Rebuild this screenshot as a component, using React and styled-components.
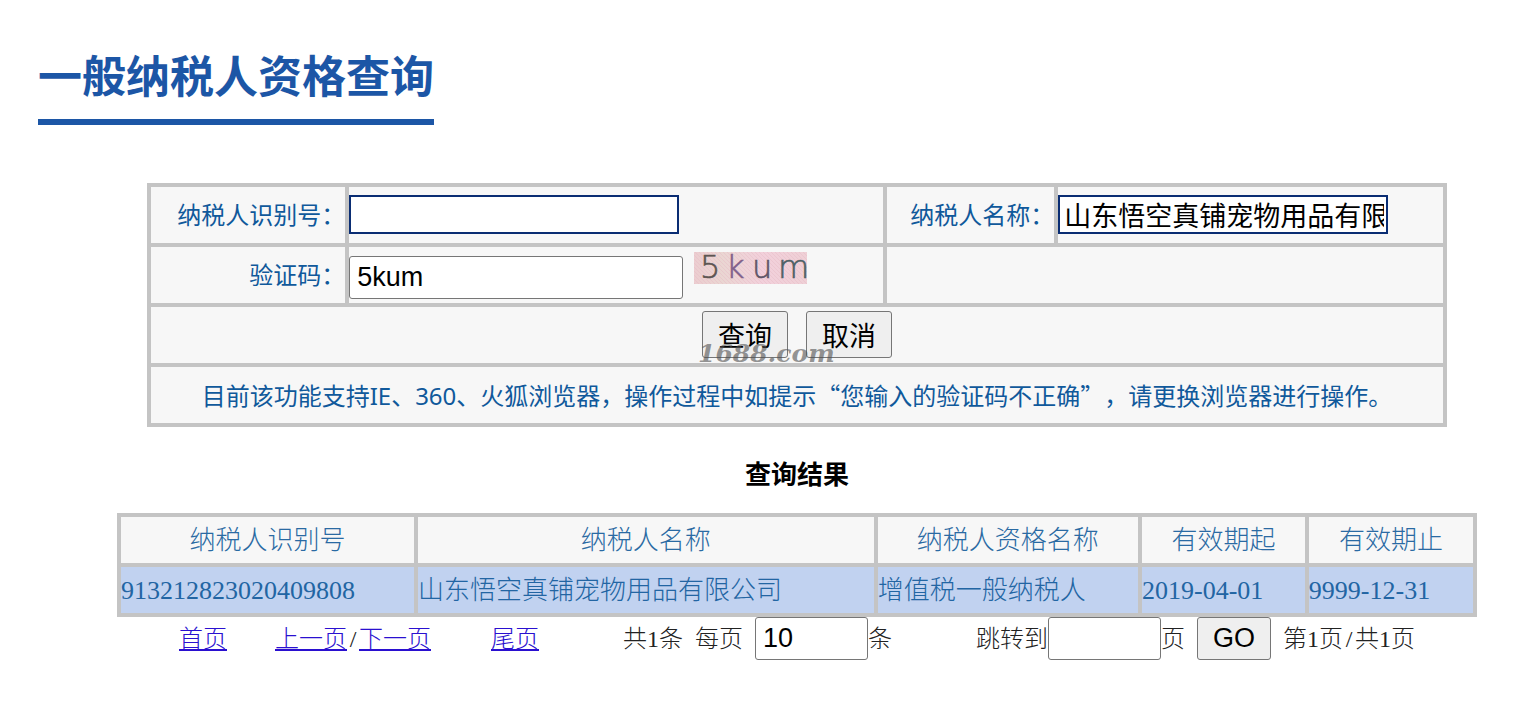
import styled, { createGlobalStyle } from "styled-components";

const GlobalStyle = createGlobalStyle`
body{
  margin: 0;
  background-color: #fff;
  text-spacing-trim: space-all;
}
*{
  box-sizing: border-box;
}
`

const cjk = `"Noto Sans CJK SC", sans-serif`;
const sans = `"Noto Sans", ${cjk}`;
const serif = `"Liberation Serif", "Noto Sans CJK SC", serif`;
const arial = `"Liberation Sans", ${cjk}`;

const Page = styled.div`
padding: 48px 0 40px 38px;
font-family: ${serif};
`
const Title = styled.h1`
display: inline-block;
margin: 0;
padding-bottom: 19px;
border-bottom: 6px solid #1c56a6;
color: #1c56a6;
font-family: ${cjk};
font-size: 44px;
font-weight: bold;
line-height: 52px;
vertical-align: top;
`
const Content = styled.main`
display: flex;
flex-direction: column;
align-items: center;
padding: 58px 0 0 24px;
`
const Table = styled.table`
width: 100%;
max-width: ${(props) => props.$max}px;
border-collapse: collapse;
table-layout: fixed;
`
const Col = styled.col`
width: ${(props) => props.$width};
`
const FormCell = styled.td`
height: 60px;
padding: 0;
border: 4px solid #c4c4c4;
background-color: #f7f7f7;
color: #10599b;
font-family: ${sans};
font-size: 24px;
line-height: 32px;
text-align: ${(props) => props.$align || "left"};
`
const Quote = styled.span`
font-family: ${cjk};
`
const TextInput = styled.input`
display: block;
width: 330px;
max-width: 100%;
height: 39px;
margin-bottom: 2px;
padding: 0 2px 0 4px;
border: 2px solid #0a2d73;
background-color: #fff;
color: #000;
font-family: ${arial};
font-size: 27px;
`
const PlainInput = styled.input`
width: ${(props) => props.$width}px;
height: 43px;
padding: 0 7px;
border: 1px solid #767676;
border-radius: 3px;
background-color: #fff;
color: #000;
font-family: ${arial};
font-size: 27px;
`
const CodeLine = styled.div`
display: flex;
align-items: flex-end;
gap: 11px;
height: 56px;
padding: 4px 0;
`
const Captcha = styled.svg`
align-self: flex-start;
width: 118px;
height: 34px;
overflow: visible;
`
const Buttons = styled.div`
position: relative;
display: flex;
align-items: flex-start;
justify-content: center;
gap: 18px;
height: 56px;
padding-top: 4px;
`
const Button = styled.button`
width: ${(props) => props.$width}px;
height: ${(props) => props.$height}px;
padding: 0;
border: 1px solid #767676;
border-radius: 3px;
background-color: #efefef;
color: #000;
font-family: ${arial};
font-size: 27px;
`
const Watermark = styled.span`
position: absolute;
top: 32px;
left: 50%;
margin-left: -99px;
color: rgba(80, 80, 80, 0.6);
font-family: "DejaVu Serif", serif;
font-size: 25px;
font-style: italic;
font-weight: bold;
line-height: 30px;
pointer-events: none;
`
const ResultTitle = styled.h2`
margin: 33px 0 21px;
color: #000;
font-size: 26px;
font-weight: bold;
line-height: 32px;
`
const HeadCell = styled.th`
height: 50px;
padding: 2px 0 0;
border: 4px solid #c4c4c4;
background-color: #f7f7f7;
color: #2a6aa3;
font-size: 26px;
font-weight: 300;
line-height: 36px;
`
const Cell = styled.td`
height: 50px;
padding: 2px 0 0;
border: 4px solid #c4c4c4;
background-color: #c1d2f0;
color: #2265a3;
font-size: 26px;
font-weight: 300;
line-height: 36px;
white-space: nowrap;
`
const Pager = styled.nav`
display: flex;
align-items: center;
justify-content: center;
color: #222;
font-size: 24px;
font-weight: 300;
line-height: 32px;
white-space: nowrap;
`
const Group = styled.div`
display: flex;
align-items: center;
margin-left: ${(props) => props.$left || 0}px;
`
const PageLink = styled.a`
color: #2a10d0;
text-decoration: underline;
`
const Slash = styled.span`
width: 12px;
text-align: center;
`

const columns = ["纳税人识别号", "纳税人名称", "纳税人资格名称", "有效期起", "有效期止"];
const rows = [
  ["913212823020409808", "山东悟空真铺宠物用品有限公司", "增值税一般纳税人", "2019-04-01", "9999-12-31"],
];

const CaptchaImage = () => {
    return (
      <Captcha viewBox="0 0 118 34" role="img" aria-label="5kum">
        <defs>
          <linearGradient id="pink" x1="0" x2="1" y1="0" y2="0">
            <stop offset="0" stopColor="#eccdd0" />
            <stop offset="0.25" stopColor="#ead6d2" />
            <stop offset="0.6" stopColor="#f2d0db" />
            <stop offset="1" stopColor="#efd0d6" />
          </linearGradient>
          <pattern id="hatch" width="4" height="4" patternUnits="userSpaceOnUse">
            <path d="M0 0L4 4" stroke="#e6bcc6" strokeWidth="0.5" />
          </pattern>
        </defs>
        <rect x="0" y="1" width="113" height="32" fill="url(#pink)" />
        <rect x="0" y="1" width="113" height="32" fill="url(#hatch)" />
        <g fontFamily="DejaVu Sans" fontSize="32" fontWeight="200" strokeWidth="0.6">
          <text x="6" y="27" fill="#5d5552" stroke="#5d5552">5</text>
          <text x="32" y="27" fill="#80608a" stroke="#80608a">k</text>
          <text x="58" y="27" fill="#5f5568" stroke="#5f5568">u</text>
          <text x="84" y="27" fill="#4c6065" stroke="#4c6065">m</text>
        </g>
      </Captcha>
    );
  }

const QueryForm = () => {
    return (
      <Table $max={1300}>
        <colgroup>
          <Col $width="15.3%" />
          <Col $width="41.5%" />
          <Col $width="13.2%" />
          <Col $width="30%" />
        </colgroup>
        <tbody>
          <tr>
            <FormCell $align="right"><label htmlFor="taxId">纳税人识别号：</label></FormCell>
            <FormCell><TextInput id="taxId" type="text" /></FormCell>
            <FormCell $align="right"><label htmlFor="taxName">纳税人名称：</label></FormCell>
            <FormCell><TextInput id="taxName" type="text" defaultValue="山东悟空真铺宠物用品有限公司" /></FormCell>
          </tr>
          <tr>
            <FormCell $align="right"><label htmlFor="code">验证码：</label></FormCell>
            <FormCell>
              <CodeLine>
                <PlainInput id="code" type="text" $width={334} defaultValue="5kum" />
                <CaptchaImage />
              </CodeLine>
            </FormCell>
            <FormCell colSpan={2} />
          </tr>
          <tr>
            <FormCell colSpan={4}>
              <Buttons>
                <Button type="button" $width={86} $height={47}>查询</Button>
                <Button type="button" $width={86} $height={47}>取消</Button>
                <Watermark>1688.com</Watermark>
              </Buttons>
            </FormCell>
          </tr>
          <tr>
            <FormCell colSpan={4} $align="center">
              目前该功能支持IE、360、火狐浏览器，操作过程中如提示<Quote>“您输入的验证码不正确”</Quote>，请更换浏览器进行操作。
            </FormCell>
          </tr>
        </tbody>
      </Table>
    );
  }

const ResultTable = () => {
    return (
      <Table $max={1360}>
        <colgroup>
          <Col $width="21.9%" />
          <Col $width="33.9%" />
          <Col $width="19.5%" />
          <Col $width="12.3%" />
          <Col $width="12.4%" />
        </colgroup>
        <thead>
          <tr>{columns.map((name) => <HeadCell key={name}>{name}</HeadCell>)}</tr>
        </thead>
        <tbody>
          {rows.map((row) => (
            <tr key={row[0]}>{row.map((value) => <Cell key={value}>{value}</Cell>)}</tr>
          ))}
        </tbody>
      </Table>
    );
  }

const App = () => {
    return (
      <Page>
        <GlobalStyle />
        <Title>一般纳税人资格查询</Title>
        <Content>
          <QueryForm />
          <ResultTitle>查询结果</ResultTitle>
          <ResultTable />
          <Pager>
            <PageLink href="#first">首页</PageLink>
            <Group $left={48}>
              <PageLink href="#prev">上一页</PageLink>
              <Slash>/</Slash>
              <PageLink href="#next">下一页</PageLink>
            </Group>
            <Group $left={60}><PageLink href="#last">尾页</PageLink></Group>
            <Group $left={84}>共1条</Group>
            <Group $left={12}>
              <label htmlFor="size">每页</label>
              <Group $left={12}><PlainInput id="size" type="text" $width={113} defaultValue="10" /></Group>
              条
            </Group>
            <Group $left={84}>
              <label htmlFor="jump">跳转到</label>
              <PlainInput id="jump" type="text" $width={113} />
              页
            </Group>
            <Group $left={12}><Button type="button" $width={74} $height={43}>GO</Button></Group>
            <Group $left={12}>第1页<Slash>/</Slash>共1页</Group>
          </Pager>
        </Content>
      </Page>
    );
  }

export default App;
